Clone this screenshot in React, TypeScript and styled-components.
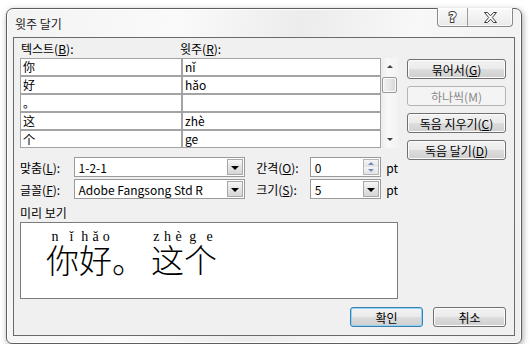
import styled, { createGlobalStyle } from "styled-components";

const GlobalStyle = createGlobalStyle`
  html, body {
    margin: 0;
    padding: 0;
    background: #ffffff;
  }
  body {
    font-family: "Noto Sans CJK KR", "Noto Sans", sans-serif;
    font-size: 12px;
    color: #000;
  }
  * {
    box-sizing: border-box;
  }
`;

const Window = styled.div`
  margin: 8px 0 0 6px;
  width: 516px;
  height: 336px;
  display: flex;
  flex-direction: column;
  padding: 0 6px 7px 6px;
  border: 1px solid #5e5e5e;
  border-radius: 7px 7px 6px 6px;
  background: linear-gradient(
    100deg,
    #f3f3f3 0%,
    #fafafa 30%,
    #ececec 52%,
    #f8f8f8 72%,
    #efefef 100%
  );
  box-shadow: 1px 2px 6px rgba(0, 0, 0, 0.35),
    inset 0 0 0 1px rgba(255, 255, 255, 0.9);
`;

const TitleBar = styled.div`
  height: 28px;
  display: flex;
  align-items: center;
`;

const Title = styled.span`
  margin-left: 2px;
  font-size: 12px;
  color: #1a1a1a;
`;

const TitleButtons = styled.div`
  margin-left: auto;
  margin-right: 2px;
  align-self: flex-start;
  margin-top: -1px;
  display: flex;
  height: 19px;
  border: 1px solid #8a8a8a;
  border-top: none;
  border-radius: 0 0 4px 4px;
  overflow: hidden;
  background: linear-gradient(#fbfbfb, #e9e9e9);
  box-shadow: inset 0 0 0 1px rgba(255, 255, 255, 0.8);
`;

const CapButton = styled.div<{ $w: number; $sep?: boolean }>`
  width: ${(p) => p.$w}px;
  display: flex;
  align-items: center;
  justify-content: center;
  border-left: ${(p) => (p.$sep ? "1px solid #9a9a9a" : "none")};
`;

const HelpGlyph = styled.span`
  font-family: "DejaVu Sans", sans-serif;
  font-weight: bold;
  font-size: 14px;
  line-height: 14px;
  color: #ffffff;
  -webkit-text-stroke: 1.8px #3a3a3a;
  paint-order: stroke fill;
`;

const Client = styled.div`
  flex: 1;
  display: flex;
  flex-direction: column;
  border: 1px solid #6a6a6a;
  background: #f0f0f0;
  padding: 0 8px 8px 6px;
`;

const Main = styled.div`
  display: flex;
  gap: 9px;
`;

const LeftCol = styled.div`
  width: 378px;
  display: flex;
  flex-direction: column;
`;

const RightCol = styled.div`
  width: 99px;
  padding-top: 21px;
  display: flex;
  flex-direction: column;
  gap: 7px;
`;

const HeaderRow = styled.div`
  height: 20px;
  display: flex;
  align-items: center;
  padding-top: 1px;
`;

const HeadLabel = styled.span<{ $w?: number }>`
  width: ${(p) => (p.$w ? `${p.$w}px` : "auto")};
  padding-left: 1px;
`;

const ListArea = styled.div`
  display: flex;
  height: 90px;
`;

const Table = styled.div`
  width: 361px;
  display: grid;
  grid-template-columns: 160px 197px;
  grid-auto-rows: 16px;
  gap: 2px;
  padding: 1px;
  background: #a3a3a3;
`;

const Cell = styled.div`
  background: #ffffff;
  padding-left: 2px;
  line-height: 16px;
  font-size: 12px;
  white-space: nowrap;
`;

const ScrollBar = styled.div`
  width: 17px;
  display: flex;
  flex-direction: column;
  align-items: center;
  background: linear-gradient(90deg, #ececec, #f8f8f8 40%, #f3f3f3);
`;

const ArrowBox = styled.div`
  width: 17px;
  height: 17px;
  display: flex;
  align-items: center;
  justify-content: center;
`;

const Tri = styled.span<{ $dir: "up" | "down"; $color?: string; $size?: number }>`
  width: 0;
  height: 0;
  border-left: ${(p) => p.$size ?? 4}px solid transparent;
  border-right: ${(p) => p.$size ?? 4}px solid transparent;
  ${(p) =>
    p.$dir === "up"
      ? `border-bottom: ${p.$size ?? 4}px solid ${p.$color ?? "#404040"};`
      : `border-top: ${p.$size ?? 4}px solid ${p.$color ?? "#404040"};`}
`;

const Thumb = styled.div`
  width: 15px;
  height: 16px;
  margin-top: 2px;
  border: 1px solid #979797;
  border-radius: 2px;
  background: linear-gradient(90deg, #f2f2f2, #e6e6e6 50%, #d6d6d6);
  box-shadow: inset 0 0 0 1px #fbfbfb;
`;

const Track = styled.div`
  flex: 1;
`;

const Fields = styled.div`
  margin-top: 9px;
  display: flex;
  flex-direction: column;
  gap: 2px;
`;

const FieldRow = styled.div`
  height: 20px;
  display: flex;
  align-items: center;
`;

const FieldLabel = styled.span<{ $w: number; $ml?: number }>`
  width: ${(p) => p.$w}px;
  margin-left: ${(p) => p.$ml ?? 0}px;
  white-space: nowrap;
`;

const Combo = styled.div<{ $w: number }>`
  width: ${(p) => p.$w}px;
  height: 20px;
  display: flex;
  align-items: center;
  border: 1px solid #9a9a9a;
  background: #ffffff;
  padding: 1px;
`;

const ComboText = styled.span`
  flex: 1;
  padding-left: 3px;
  white-space: nowrap;
  overflow: hidden;
`;

const DropButton = styled.div`
  width: 16px;
  height: 16px;
  display: flex;
  align-items: center;
  justify-content: center;
  padding-top: 2px;
  border: 1px solid #a8a8a8;
  background: linear-gradient(#f7f7f7, #e4e4e4 50%, #d6d6d6);
`;

const SpinButtons = styled.div`
  width: 16px;
  height: 16px;
  display: flex;
  flex-direction: column;
  border: 1px solid #b5b5b5;
`;

const SpinHalf = styled.div`
  flex: 1;
  display: flex;
  align-items: center;
  justify-content: center;
  background: linear-gradient(#f6f6f6, #e2e2e2);
`;

const Unit = styled.span`
  margin-left: 5px;
`;

const PreviewLabel = styled.div`
  height: 23px;
  padding-top: 6px;
  line-height: 16px;
`;

const PreviewBox = styled.div`
  height: 77px;
  border: 1px solid #7c7c7c;
  background: #ffffff;
  padding: 7px 0 0 25px;
  display: flex;
`;

const RubyCol = styled.div<{ $w: number }>`
  width: ${(p) => p.$w}px;
  display: flex;
  flex-direction: column;
`;

const PinyinLine = styled.div`
  height: 14px;
  display: flex;
  justify-content: space-around;
  font-family: "Liberation Serif", serif;
  font-size: 14px;
  line-height: 14px;
`;

const Han = styled.div`
  font-family: "Noto Sans CJK SC", sans-serif;
  font-weight: 300;
  font-size: 33px;
  line-height: 31px;
  white-space: nowrap;
`;

const Footer = styled.div`
  margin-top: auto;
  display: flex;
  justify-content: flex-end;
  gap: 10px;
`;

const Button = styled.div<{ $w?: number; $disabled?: boolean; $default?: boolean }>`
  width: ${(p) => p.$w ?? 99}px;
  height: 20px;
  display: flex;
  align-items: center;
  justify-content: center;
  border-radius: 3px;
  font-size: 12px;
  white-space: nowrap;
  border: 1px solid
    ${(p) => (p.$disabled ? "#b2b5b8" : p.$default ? "#3c7fb1" : "#707070")};
  color: ${(p) => (p.$disabled ? "#8a8a8a" : "#000")};
  background: ${(p) =>
    p.$disabled
      ? "#f4f4f4"
      : "linear-gradient(#f2f2f2 0%, #ebebeb 50%, #dddddd 51%, #cfcfcf 100%)"};
  box-shadow: ${(p) =>
    p.$disabled
      ? "none"
      : p.$default
      ? "inset 0 0 0 1px #8fd3f5"
      : "inset 0 0 0 1px #fcfcfc"};
`;

const rows: [string, string][] = [
  ["你", "nǐ"],
  ["好", "hǎo"],
  ["。", ""],
  ["这", "zhè"],
  ["个", "ge"],
];

const ruby = [
  { ch: "你", py: ["n", "ǐ"], w: 33 },
  { ch: "好", py: ["h", "ǎ", "o"], w: 33 },
  { ch: "。", py: [] as string[], w: 39 },
  { ch: "这", py: ["z", "h", "è"], w: 33 },
  { ch: "个", py: ["g", "e"], w: 34 },
];

function CloseIcon() {
  return (
    <svg width="13" height="11" viewBox="0 0 13 11">
      <polygon
        points="0.5,0.5 3.5,0.5 6.5,3.8 9.5,0.5 12.5,0.5 8.3,5.5 12.5,10.5 9.5,10.5 6.5,7.2 3.5,10.5 0.5,10.5 4.7,5.5"
        fill="#ffffff"
        stroke="#3c3c3c"
        strokeWidth="1"
        strokeLinejoin="round"
      />
    </svg>
  );
}

export default function App() {
  return (
    <>
      <GlobalStyle />
      <Window>
        <TitleBar>
          <Title>윗주 달기</Title>
          <TitleButtons>
            <CapButton $w={29}>
              <HelpGlyph>?</HelpGlyph>
            </CapButton>
            <CapButton $w={45} $sep>
              <CloseIcon />
            </CapButton>
          </TitleButtons>
        </TitleBar>
        <Client>
          <Main>
            <LeftCol>
              <HeaderRow>
                <HeadLabel $w={159}>
                  텍스트(<u>B</u>):
                </HeadLabel>
                <HeadLabel>
                  윗주(<u>R</u>):
                </HeadLabel>
              </HeaderRow>
              <ListArea>
                <Table>
                  {rows.flatMap(([t, p], i) => [
                    <Cell key={`t${i}`}>{t}</Cell>,
                    <Cell key={`p${i}`}>{p}</Cell>,
                  ])}
                </Table>
                <ScrollBar>
                  <ArrowBox>
                    <Tri $dir="up" $size={3} />
                  </ArrowBox>
                  <Thumb />
                  <Track />
                  <ArrowBox>
                    <Tri $dir="down" $size={3} />
                  </ArrowBox>
                </ScrollBar>
              </ListArea>
              <Fields>
                <FieldRow>
                  <FieldLabel $w={54}>
                    맞춤(<u>L</u>):
                  </FieldLabel>
                  <Combo $w={173}>
                    <ComboText>1-2-1</ComboText>
                    <DropButton>
                      <Tri $dir="down" $size={4} $color="#000" />
                    </DropButton>
                  </Combo>
                  <FieldLabel $w={54} $ml={11}>
                    간격(<u>O</u>):
                  </FieldLabel>
                  <Combo $w={72}>
                    <ComboText>0</ComboText>
                    <SpinButtons>
                      <SpinHalf>
                        <Tri $dir="up" $size={3} $color="#6f8fb8" />
                      </SpinHalf>
                      <SpinHalf>
                        <Tri $dir="down" $size={3} $color="#6f8fb8" />
                      </SpinHalf>
                    </SpinButtons>
                  </Combo>
                  <Unit>pt</Unit>
                </FieldRow>
                <FieldRow>
                  <FieldLabel $w={54}>
                    글꼴(<u>F</u>):
                  </FieldLabel>
                  <Combo $w={173}>
                    <ComboText>Adobe Fangsong Std R</ComboText>
                    <DropButton>
                      <Tri $dir="down" $size={4} $color="#000" />
                    </DropButton>
                  </Combo>
                  <FieldLabel $w={54} $ml={11}>
                    크기(<u>S</u>):
                  </FieldLabel>
                  <Combo $w={72}>
                    <ComboText>5</ComboText>
                    <DropButton>
                      <Tri $dir="down" $size={4} $color="#000" />
                    </DropButton>
                  </Combo>
                  <Unit>pt</Unit>
                </FieldRow>
              </Fields>
              <PreviewLabel>미리 보기</PreviewLabel>
              <PreviewBox>
                {ruby.map((r) => (
                  <RubyCol key={r.ch} $w={r.w}>
                    <PinyinLine>
                      {r.py.map((l, j) => (
                        <span key={j}>{l}</span>
                      ))}
                    </PinyinLine>
                    <Han>{r.ch}</Han>
                  </RubyCol>
                ))}
              </PreviewBox>
            </LeftCol>
            <RightCol>
              <Button>
                묶어서(<u>G</u>)
              </Button>
              <Button $disabled>하나씩(M)</Button>
              <Button>
                독음 지우기(<u>C</u>)
              </Button>
              <Button>
                독음 달기(<u>D</u>)
              </Button>
            </RightCol>
          </Main>
          <Footer>
            <Button $w={73} $default>
              확인
            </Button>
            <Button $w={73}>취소</Button>
          </Footer>
        </Client>
      </Window>
    </>
  );
}
